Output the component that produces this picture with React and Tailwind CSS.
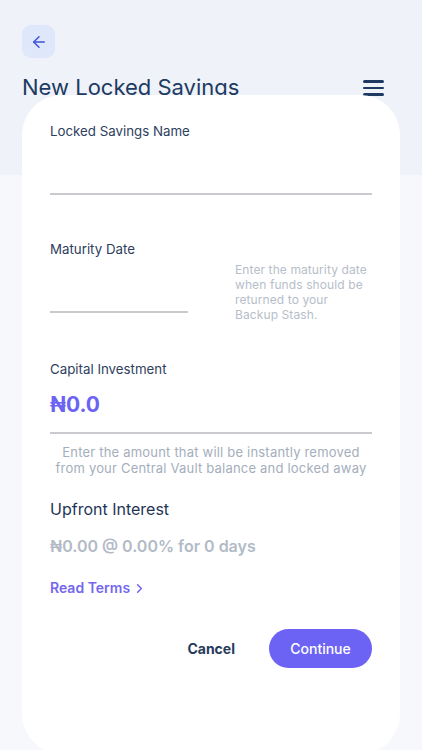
import { ArrowLeft, ChevronRight } from "lucide-react";

const Field = ({ label, className = "" }) => (
  <div className={className}>
    <p className="text-[13.3px] leading-5 text-[#2e405e]">{label}</p>
    <div className="h-[52px]" />
    <div className="h-[2px] bg-[#c9cacd]" />
  </div>
);

const App = () => {
  return (
    <div
      className="h-[750px] w-full overflow-hidden flex flex-col bg-[linear-gradient(to_bottom,#eff3f9_175px,#f6f8fc_175px)]"
      style={{ fontFamily: "Inter, 'Noto Sans', sans-serif" }}
    >
      <div className="px-[22px] pt-[25px]">
        <button className="h-[33px] w-[33px] rounded-[9px] bg-[#dfe7fb] flex items-center justify-center text-[#3f51dc]">
          <ArrowLeft className="h-[18px] w-[18px]" strokeWidth={2} />
        </button>
        <div className="flex items-center justify-between mt-[14px] pr-[16px]">
          <h1 className="text-[22px] leading-[30px] text-[#1d3a62]">
            New Locked Savings
          </h1>
          <div className="flex flex-col gap-[4px] w-[21px] mt-[2px]">
            <span className="h-[2.5px] bg-[#1d3a62] rounded-full" />
            <span className="h-[2.5px] bg-[#1d3a62] rounded-full" />
            <span className="h-[2.5px] bg-[#1d3a62] rounded-full" />
          </div>
        </div>
      </div>

      <div className="relative mx-[22px] -mt-[7px] flex-1 mb-[-4px] bg-white rounded-[40px] px-[28px] pt-[26px]">
        <Field label="Locked Savings Name" />

        <div className="flex items-start mt-[44px]">
          <Field label="Maturity Date" className="w-[138px]" />
          <p className="ml-[47px] mt-[23px] whitespace-nowrap text-[12px] leading-[15px] text-[#b6bec9] tracking-[0.1px]">
            Enter the maturity date
            <br />
            when funds should be
            <br />
            returned to your
            <br />
            Backup Stash.
          </p>
        </div>

        <p className="mt-[37px] text-[13.3px] leading-5 text-[#2e405e]">
          Capital Investment
        </p>
        <p className="mt-[12px] text-[21px] leading-7 font-bold text-[#6c63f2]">
          ₦0.0
        </p>
        <div className="mt-[13px] h-[2px] bg-[#c9cacd]" />
        <p className="mt-[10px] text-center text-[13px] leading-4 text-[#a4aebc] tracking-[0.2px]">
          Enter the amount that will be instantly removed
          <br />
          from your Central Vault balance and locked away
        </p>

        <p className="mt-[21px] text-[16px] leading-6 text-[#1f3557]">
          Upfront Interest
        </p>
        <p className="mt-[13px] text-[16px] leading-6 font-semibold text-[#b2bac6]">
          ₦0.00 @ 0.00% for 0 days
        </p>

        <button className="mt-[20px] flex items-center gap-[2px] text-[14px] leading-5 font-semibold text-[#7467ee]">
          Read Terms
          <ChevronRight className="h-[15px] w-[15px]" strokeWidth={2.5} />
        </button>

        <div className="mt-[31px] flex items-center justify-end">
          <button className="text-[14px] font-bold text-[#263a5a]">
            Cancel
          </button>
          <button className="ml-[34px] h-[39px] w-[103px] rounded-full bg-[#6c63f5] text-white text-[14px] font-medium">
            Continue
          </button>
        </div>
      </div>
    </div>
  );
};

export default App;
